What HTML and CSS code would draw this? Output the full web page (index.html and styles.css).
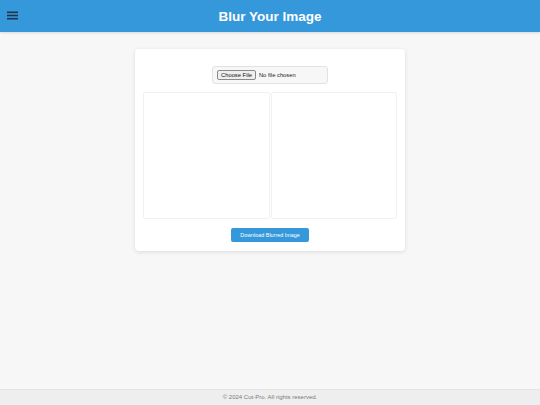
FILE: index.html
```html
<!DOCTYPE html>
<html lang="en">
<head>
<meta charset="utf-8">
<title>Blur Your Image</title>
<link rel="stylesheet" href="styles.css">
</head>
<body>
<header class="topbar">
  <button class="menu-btn" aria-label="Menu">
    <svg width="11" height="9" viewBox="0 0 11 9"><rect x="0" y="0.5" width="11" height="1.6" fill="#243447"/><rect x="0" y="3.7" width="11" height="1.6" fill="#243447"/><rect x="0" y="6.9" width="11" height="1.6" fill="#243447"/></svg>
  </button>
  <h1 class="title">Blur Your Image</h1>
</header>
<main class="main">
  <section class="card">
    <div class="upload">
      <input class="file-input" type="file" accept="image/*">
    </div>
    <div class="previews">
      <div class="preview"></div>
      <div class="preview"></div>
    </div>
    <div class="actions">
      <button class="download-btn">Download Blurred Image</button>
    </div>
  </section>
</main>
<footer class="footer">© 2024 Cut-Pro. All rights reserved.</footer>
</body>
</html>
```
FILE: styles.css
```css
* { box-sizing: border-box; }
html, body { height: 100%; }
body {
  margin: 0;
  font-family: "Liberation Sans", Arial, sans-serif;
  background: #f7f7f7;
  display: flex;
  flex-direction: column;
  min-height: 100vh;
}
.topbar {
  height: 32px;
  background: #3498db;
  display: flex;
  align-items: center;
  justify-content: center;
  position: relative;
  box-shadow: 0 1px 2px rgba(0,0,0,0.12);
}
.menu-btn {
  position: absolute;
  left: 7px;
  top: 11px;
  padding: 0;
  border: 0;
  background: none;
  width: 11px;
  height: 9px;
  display: block;
}
.menu-btn svg { display: block; }
.title {
  margin: 0;
  padding-top: 2px;
  color: #fff;
  font-size: 13.5px;
  font-weight: bold;
  line-height: 30px;
}
.main {
  flex: 1;
  display: flex;
  justify-content: center;
  align-items: flex-start;
  padding-top: 17px;
}
.card {
  width: 270px;
  background: #fff;
  border-radius: 4px;
  box-shadow: 0 1px 4px rgba(0,0,0,0.12);
  padding: 17px 8px 9px 8px;
}
.upload {
  display: flex;
  justify-content: center;
}
.file-input {
  width: 116px;
  height: 18px;
  font-family: "Liberation Sans", Arial, sans-serif;
  font-size: 5.8px;
  color: #222;
  background: #f7f7f7;
  border: 1px solid #e2e2e2;
  border-radius: 3px;
  padding: 3px 4px;
}
.file-input::file-selector-button {
  font-family: inherit;
  font-size: 5.8px;
  background: #efefef;
  border: 1px solid #8a8a8a;
  border-radius: 2px;
  padding: 1px 3px;
  margin-right: 3px;
  color: #111;
}
.previews {
  display: grid;
  grid-template-columns: 1fr 1fr;
  gap: 1px;
  margin-top: 8px;
}
.preview {
  height: 127px;
  border: 1px solid #f1f1f1;
  border-radius: 2px;
  background: #fff;
}
.actions {
  display: flex;
  justify-content: center;
  margin-top: 9px;
}
.download-btn {
  width: 78px;
  height: 14px;
  padding: 0;
  background: #3498db;
  color: #fff;
  border: 0;
  border-radius: 2px;
  font-family: "Liberation Sans", Arial, sans-serif;
  font-size: 5.4px;
}
.footer {
  height: 16px;
  background: #eeeeee;
  border-top: 1px solid #e4e4e4;
  color: #7a7a7a;
  font-size: 6px;
  text-align: center;
  line-height: 15px;
}
```
